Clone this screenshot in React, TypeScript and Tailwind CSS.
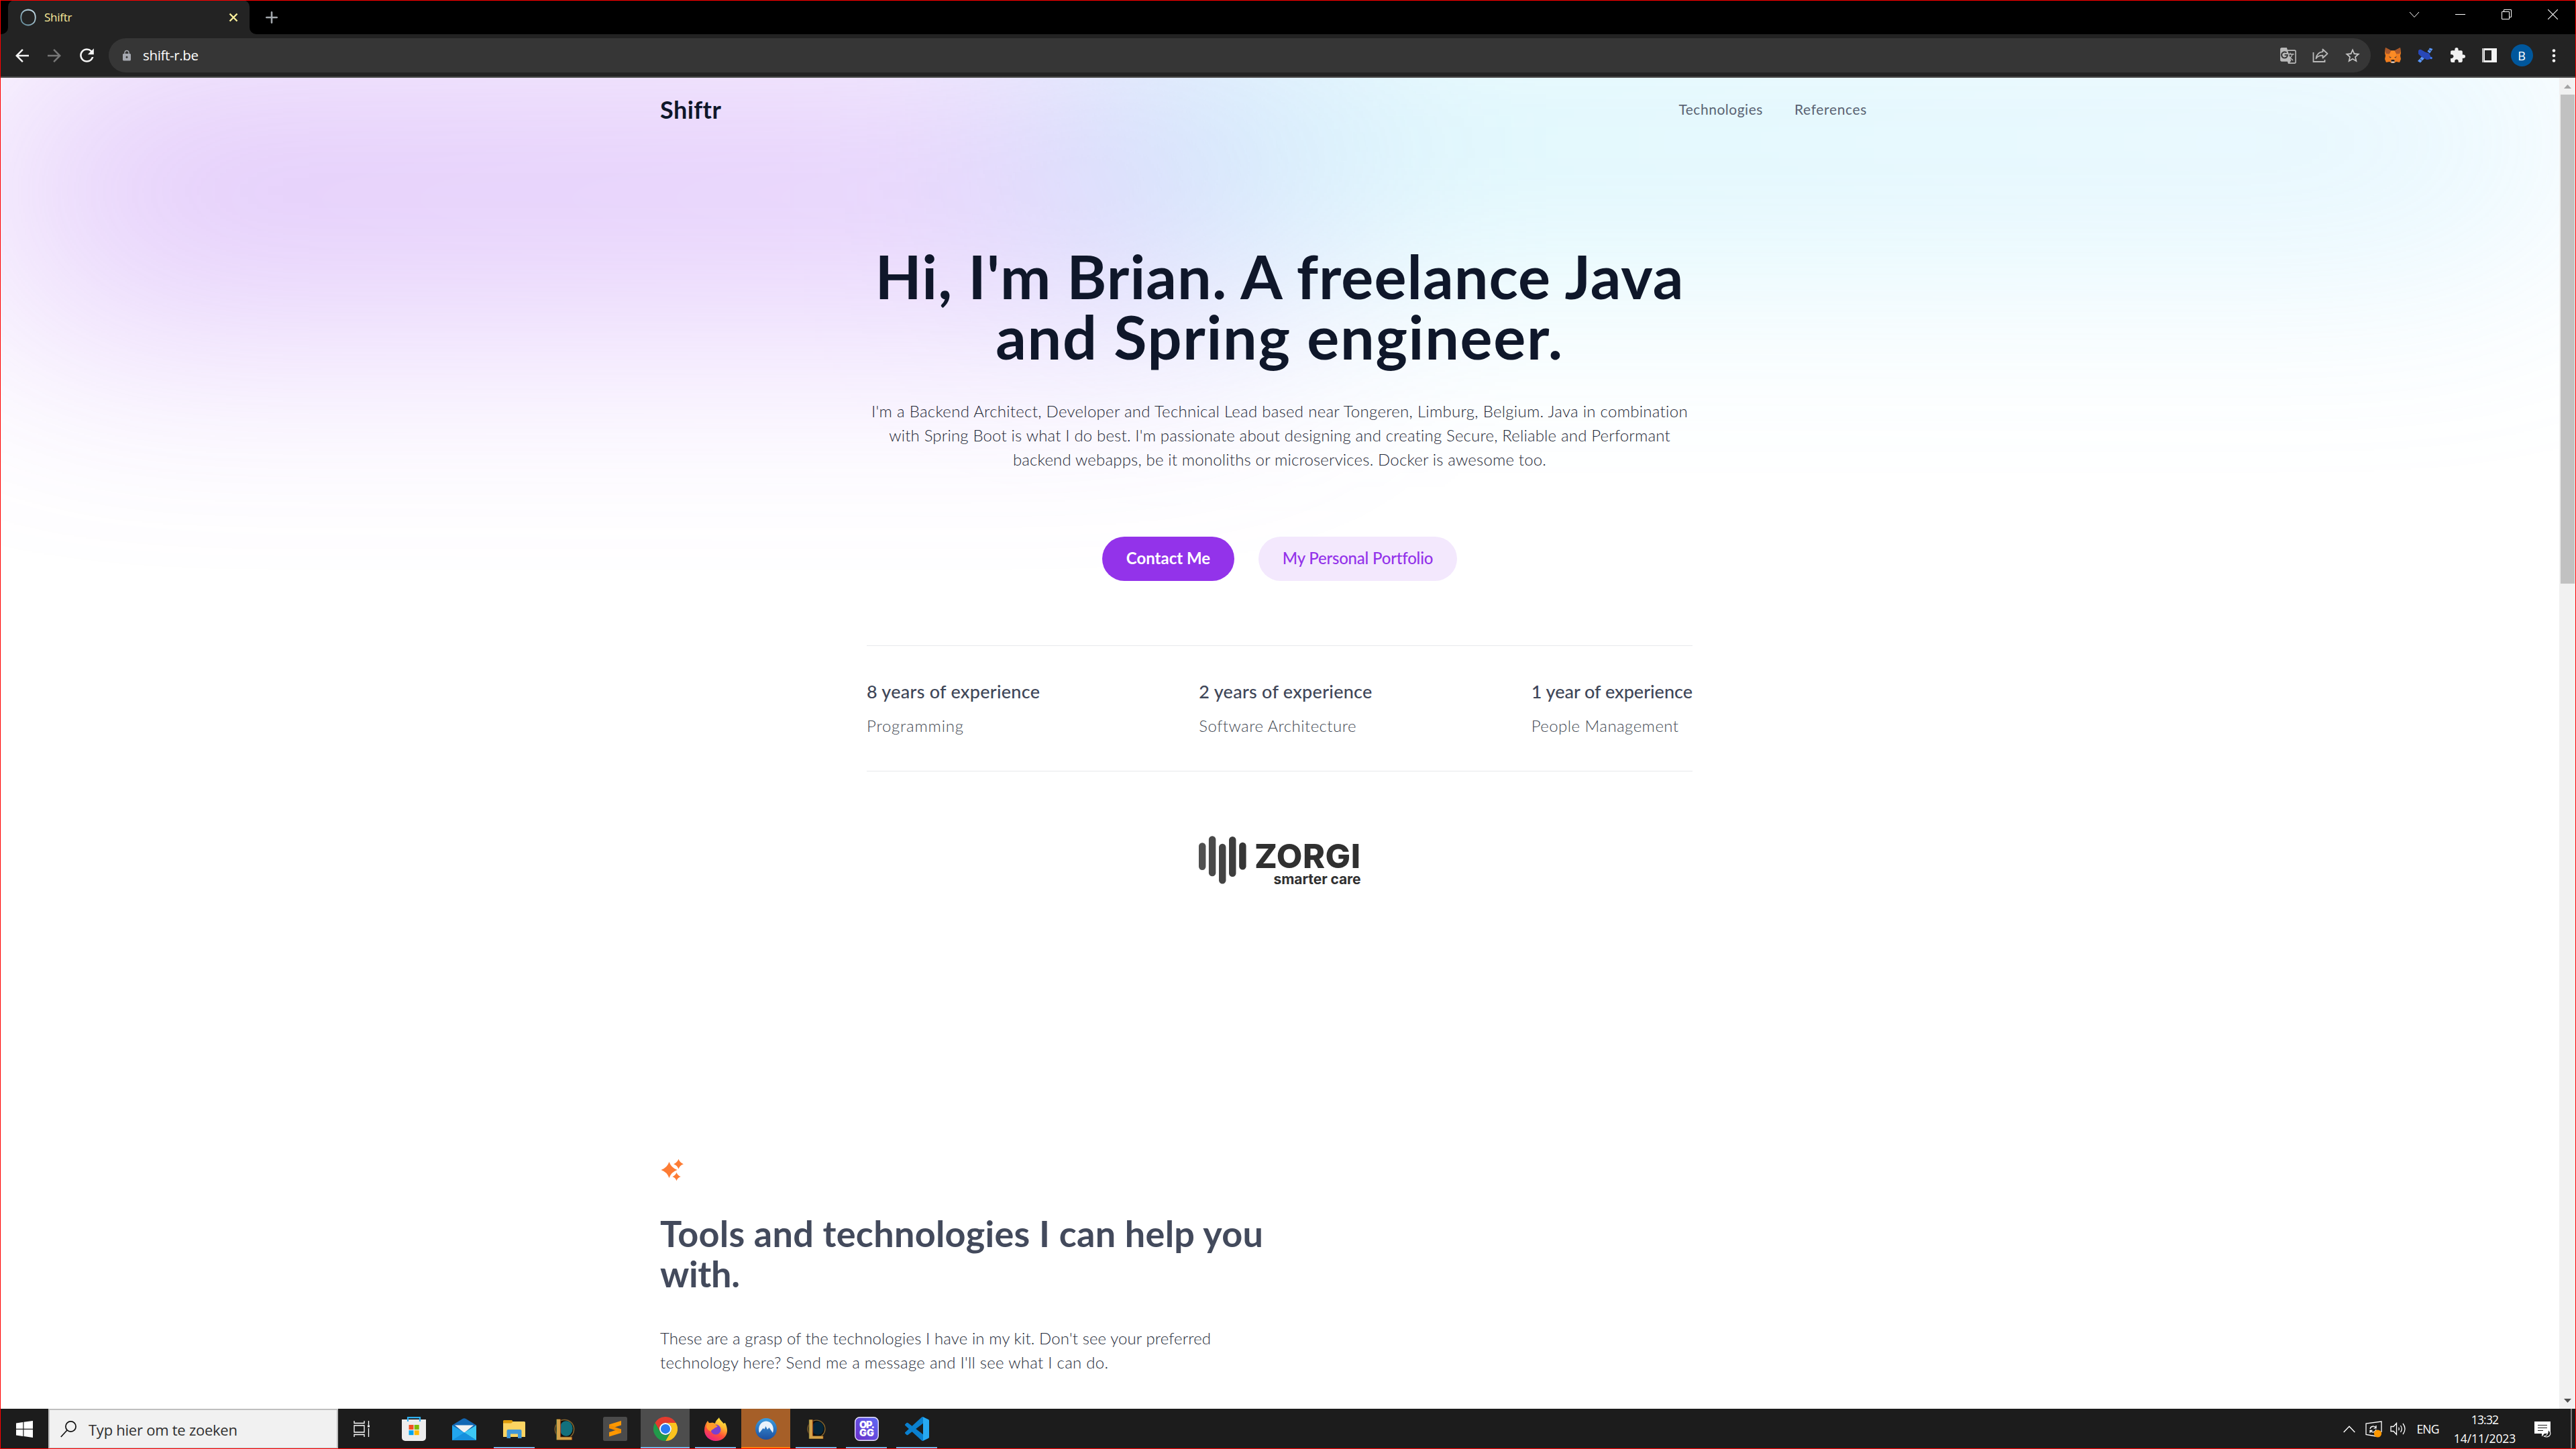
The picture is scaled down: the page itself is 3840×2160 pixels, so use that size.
import type { ReactNode } from "react";
import { MdArrowBack, MdArrowForward, MdExtension, MdGTranslate, MdLock, MdRefresh, MdStarBorder } from "react-icons/md";

/* ---------- browser chrome ---------- */

function Cell({ children, className = "w-12" }: { children: ReactNode; className?: string }) {
  return <div className={"flex shrink-0 items-center justify-center " + className}>{children}</div>;
}

function TabStrip() {
  return (
    <div className="flex h-[51px] bg-black">
      <div className="w-3 bg-[#232323]"><div className="size-full rounded-br-[10px] bg-black" /></div>
      <div className="flex w-[360px] items-center rounded-t-[10px] bg-[#232323] pr-[17px] pl-[18px]">
        <svg width="24" height="26" viewBox="0 0 24 26" fill="none">
          <defs>
            <linearGradient id="hex" x1="0" y1="1" x2="1" y2="0">
              <stop offset="0" stopColor="#5d8796" />
              <stop offset="1" stopColor="#cfe6f2" />
            </linearGradient>
          </defs>
          <path d="M12 1.5 C16 1.7 19.5 3.8 21.5 6.8 C23 10.5 23 15.5 21.5 19.2 C19.5 22.3 16 24.3 12 24.5 C8 24.3 4.5 22.3 2.5 19.2 C1 15.5 1 10.5 2.5 6.8 C4.5 3.8 8 1.7 12 1.5Z" stroke="url(#hex)" strokeWidth="1.8" />
        </svg>
        <span className="ml-3 text-[17px] tracking-[-0.25px] text-[#fbeb9b]">Shiftr</span>
        <svg className="ml-auto" width="14" height="14" viewBox="0 0 14 14" stroke="#fdf09a" strokeWidth="2.4"><path d="M1.5 1.5l11 11M12.500 1.500l-11 11" /></svg>
      </div>
      <div className="w-3 bg-[#232323]"><div className="size-full rounded-bl-[10px] bg-black" /></div>
      <Cell className="w-[42px]">
        <svg width="18" height="18" viewBox="0 0 18 18" stroke="#a3a8ad" strokeWidth="2.6" strokeLinecap="round"><path d="M9 1.300v15.400M1.300 9h15.400" /></svg>
      </Cell>
      <div className="ml-auto flex pb-2">
        <Cell className="w-[69px]"><svg width="16" height="10" viewBox="0 0 16 10" fill="none" stroke="#fff" strokeWidth="1"><path d="M1 1l7 7.500L15 1" /></svg></Cell>
        <Cell className="w-[69px]"><div className="h-px w-[15px] bg-white" /></Cell>
        <Cell className="w-[69px]"><svg width="15" height="15" viewBox="0 0 15 15" fill="none" stroke="#fff"><path d="M.5 3.500h11v11h-11zM3.500 3.500v-3h11v11h-3" /></svg></Cell>
        <Cell className="w-[69px]"><svg width="15" height="15" viewBox="0 0 15 15" stroke="#fff" strokeWidth="1.1"><path d="M0 0l15 15M15 0L0 15" /></svg></Cell>
      </div>
    </div>
  );
}

function Fox() {
  return (
    <svg width="24" height="23" viewBox="0 0 24 23">
      <path d="M1 0l8.500 4.500h5L23 0l1 8-1 4 1 5-2 5-5-1-3 2h-4l-3-2-5 1-2-5 1-5-1-4z" fill="#ef7d1f" />
      <path d="M1 0l8.500 4.500L7 9.500 2 9 .5 6zM23 0l-8.500 4.500L17 9.500l5-.5 1.500-3z" fill="#a9582b" />
      <path d="M7 9.500l2.500-5h5l2.500 5-2 8H9z" fill="#fb8b25" />
      <path d="M6 13l4 1.500-2 1zM18 13l-4 1.500 2 1z" fill="#4a3a36" />
      <path d="M9 19h6l-1 4h-4z" fill="#d8c4b6" />
      <path d="M10 18h4l1 2.500h-6z" fill="#231f20" />
    </svg>
  );
}

function Satellite() {
  return (
    <svg width="24" height="23" viewBox="0 0 24 23">
      <path d="M15.500 5.500L19 .5 23.500 2 19 8.500zM1 20l6-6.500 4 2.500-6 6.500z" fill="#5a98ff" />
      <path d="M17.200 3l4 2M4 16.700l4 2.800" stroke="#232323" strokeWidth=".8" />
      <path d="M2 4.500Q3 2 6 3l6 3.500 6 2 2.500 5-2 4-4 .5-8-4.500-4.500-4z" fill="#2848b8" />
      <circle cx="21" cy="15.500" r="1.800" fill="#3f78f0" />
    </svg>
  );
}

function Toolbar() {
  return (
    <div className="flex h-[65px] items-center border-b-2 border-[#505050] bg-[#232323] pr-[9px] pl-[9px]">
      <Cell><MdArrowBack size={30} color="#f5f5f5" /></Cell>
      <Cell><MdArrowForward size={30} color="#777" /></Cell>
      <Cell><MdRefresh size={31} color="#f5f5f5" /></Cell>
      <div className="ml-[9px] flex h-[51px] flex-1 items-center rounded-full bg-[#363636] pr-[3px] pl-[18px]">
        <MdLock size={18} color="#a6a9b1" />
        <span className="ml-[15px] text-[20.5px] tracking-[-0.35px] text-white">shift-r.be</span>
        <div className="ml-auto flex">
          <Cell><MdGTranslate size={26} color="#b9b9b9" /></Cell>
          <Cell>
            <svg width="24" height="22" viewBox="0 0 24 22" fill="none" stroke="#b9b9b9" strokeWidth="1.800">
              <path d="M1.500 6v14h17v-3" />
              <path d="M15.500 1.500l7 6.500-7 6.500v-3.800c-4 0-7.500.8-10 4.500.8-5.500 4-9.500 10-10z" strokeLinejoin="round" />
            </svg>
          </Cell>
          <Cell><MdStarBorder size={26} color="#c4c4c4" /></Cell>
        </div>
      </div>
      <div className="ml-[9px] flex">
        <Cell><Fox /></Cell>
        <Cell><Satellite /></Cell>
        <Cell><MdExtension size={25} color="#f1f1f1" /></Cell>
        <Cell><svg width="22" height="21"><path d="M0 0h22v21H0z" fill="#f3f3f3" /><path d="M0 0h3v21H0z" fill="#bdbdbd" /><path d="M4 3h10v15H4z" fill="#232323" /></svg></Cell>
        <Cell><div className="flex size-[33px] items-center justify-center rounded-full bg-[#00579c] text-[18px] leading-none text-white">B</div></Cell>
        <Cell><svg width="6" height="20" fill="#f3f3f3"><circle cx="3" cy="2.500" r="2.300" /><circle cx="3" cy="10" r="2.300" /><circle cx="3" cy="17.500" r="2.300" /></svg></Cell>
      </div>
    </div>
  );
}

function Scrollbar() {
  return (
    <div className="flex w-[25px] flex-col bg-[#f1f1f1]">
      <Cell className="h-[25px] w-full"><svg width="11" height="6"><path d="M5.500 0L11 6H0z" fill="#a3a3a3" /></svg></Cell>
      <div className="ml-[2px] h-[729px] w-[21px] bg-[#c1c1c1]" />
      <Cell className="mt-auto h-6 w-full"><svg width="11" height="6"><path d="M0 0h11L5.500 6z" fill="#505050" /></svg></Cell>
    </div>
  );
}

/* ---------- web page ---------- */

function Glow() {
  return (
    <div aria-hidden="true" className="absolute inset-0 grid grid-cols-2 opacity-40">
      <div className="h-[336px] bg-gradient-to-br from-[#9333ea] to-[#c084fc] blur-[190px]" />
      <div className="-ml-[312px] h-[192px] bg-gradient-to-r from-[#22d3ee] to-[#7dd3fc] blur-[190px]" />
    </div>
  );
}

function Stat({ title, label, titleClass, labelClass }: { title: string; label: string; titleClass: string; labelClass: string }) {
  return (
    <div>
      <div className={"text-[27px] leading-[42px] font-medium text-[#3f4759] " + titleClass}>{title}</div>
      <div className={"mt-3 text-2xl leading-9 font-light text-[#454b55] " + labelClass}>{label}</div>
    </div>
  );
}

function ZorgiLogo() {
  return (
    <div className="mx-auto mt-24 flex h-[72px] w-[242px]">
      <svg width="72" height="72" viewBox="0 0 72 72">
        <rect x="0" y="10" width="10.500" height="41" rx="5.200" fill="#505050" />
        <rect x="15" y="0" width="10.500" height="60.500" rx="5.200" fill="#494949" />
        <rect x="30.200" y="11.700" width="10.500" height="60" rx="5.200" fill="#444" />
        <rect x="45.300" y=".7" width="10.500" height="60.500" rx="5.200" fill="#3d3d3d" />
        <rect x="60.500" y="9.600" width="10.500" height="41" rx="5.200" fill="#363636" />
      </svg>
      <div className="ml-3 flex flex-1 flex-col items-end whitespace-nowrap font-[Inter,sans-serif] text-[#303030]">
        <div className="mt-[5px] text-[50px] leading-[50px] font-extrabold tracking-[0.5px]">ZORGI</div>
        <div className="text-[21px] leading-[20px] font-bold tracking-[-0.08px]">smarter care</div>
      </div>
    </div>
  );
}

function Sparkles() {
  const star = "M0-1Q.26-.26 1 0Q.26.26 0 1Q-.26.26-1 0Q-.26-.26 0-1Z";
  return (
    <svg width="36" height="36" viewBox="0 0 36 36" fill="#fd7c34">
      <path d={star} transform="translate(13.500 18) scale(12)" />
      <path d={star} transform="translate(27.500 9.200) scale(7.400)" />
      <path d={star} transform="translate(24.500 28) scale(6.200)" />
    </svg>
  );
}

function Page() {
  return (
    <main className="relative h-[1984px] flex-1 overflow-hidden bg-white font-[Lato,sans-serif]">
      <Glow />
      <div className="relative">
        <header className="mx-auto flex h-[94px] w-[1847px] items-center justify-between whitespace-nowrap">
          <span className="text-4xl leading-9 font-bold tracking-[0.43px] text-[#0f172a]">Shiftr</span>
          <nav className="flex gap-[47px] pr-[48px] text-[21px] leading-9 text-[#5a6373]">
            <a className="tracking-[0.52px]">Technologies</a>
            <a className="tracking-[0.65px]">References</a>
          </nav>
        </header>
        <h1 className="mt-[156px] text-center text-[90px] leading-[90px] font-bold whitespace-nowrap text-[#0f172a]">
          <span className="tracking-[1.05px]">Hi, I'm Brian. A freelance Java</span>
          <br />
          <span className="tracking-[1.68px]">and Spring engineer.</span>
        </h1>
        <p className="mt-[49px] text-center text-2xl leading-9 font-light whitespace-nowrap text-[#1f2937]">
          <span className="tracking-[0.281px]">I'm a Backend Architect, Developer and Technical Lead based near Tongeren, Limburg, Belgium. Java in combination</span>
          <br />
          <span className="tracking-[0.173px]">with Spring Boot is what I do best. I'm passionate about designing and creating Secure, Reliable and Performant</span>
          <br />
          <span className="tracking-[0.166px]">backend webapps, be it monoliths or microservices. Docker is awesome too.</span>
        </p>
        <div className="mt-[97px] flex justify-center gap-9 text-2xl leading-none whitespace-nowrap">
          <button className="flex h-[66px] w-[197px] items-center justify-center rounded-full bg-[#9333ea] pb-0.5 font-bold text-white">Contact Me</button>
          <button className="flex h-[66px] w-[296px] items-center justify-center rounded-full bg-[#f3e8fd] pb-0.5 font-medium tracking-[-0.2px] text-[#9333ea]">My Personal Portfolio</button>
        </div>
        <div className="mx-auto mt-24 flex w-[1231px] justify-between border-y border-[#e7e8eb] pt-[47px] pb-[49px] whitespace-nowrap">
          <Stat title="8 years of experience" label="Programming" titleClass="tracking-[0.275px]" labelClass="tracking-[0.77px]" />
          <Stat title="2 years of experience" label="Software Architecture" titleClass="tracking-[0.275px]" labelClass="tracking-[0.44px]" />
          <Stat title="1 year of experience" label="People Management" titleClass="tracking-normal" labelClass="tracking-[0.45px]" />
        </div>
        <ZorgiLogo />
        <section className="mx-auto mt-[408px] w-[1847px] whitespace-nowrap">
          <Sparkles />
          <h2 className="mt-[47px] text-[54px] leading-[60px] font-bold text-[#434a5c]">
            <span className="tracking-[0.276px]">Tools and technologies I can help you</span>
            <br />
            <span className="tracking-[-0.35px]">with.</span>
          </h2>
          <p className="mt-12 text-2xl leading-9 font-light text-[#262c3a]">
            <span className="tracking-[0.094px]">These are a grasp of the technologies I have in my kit. Don't see your preferred</span>
            <br />
            <span className="tracking-[0.263px]">technology here? Send me a message and I'll see what I can do.</span>
          </p>
        </section>
      </div>
    </main>
  );
}

/* ---------- taskbar ---------- */

function WindowsIcon() {
  return <svg width="25" height="25" viewBox="0 0 25 25" fill="#fff"><path d="M0 3.500L10.300 2v9.800H0zM11.500 1.800L25 0v11.800H11.500zM0 13h10.300v10L0 21.500zM11.500 13H25v12l-13.500-1.900z" /></svg>;
}

function StoreIcon() {
  return (
    <svg width="36" height="36" viewBox="0 0 36 36">
      <path d="M9 6V1.200h18V6" fill="none" stroke="#2fb0f0" strokeWidth="2.200" />
      <path d="M0 4h36v27a5 5 0 0 1-5 5H5a5 5 0 0 1-5-5z" fill="#ededed" />
      <path d="M9 4v3M27 4v3" stroke="#2fb0f0" strokeWidth="2.200" />
      <path d="M10.500 12h7v7h-7z" fill="#f25022" /><path d="M18.700 12h7v7h-7z" fill="#7fba00" />
      <path d="M10.500 20.200h7v7h-7z" fill="#00a4ef" /><path d="M18.700 20.200h7v7h-7z" fill="#ffb900" />
    </svg>
  );
}

function MailIcon() {
  return (
    <svg width="36" height="33" viewBox="0 0 36 33">
      <path d="M0 10.500L15.500 1q2.500-1.500 5 0L36 10.500 18 22z" fill="#1267b4" />
      <path d="M4 10.500h28L18 22z" fill="#f2f2f2" />
      <path d="M0 10.500L18 21.500 36 33H0z" fill="#22a6ee" />
      <path d="M36 10.500V33L18 21.500z" fill="#3cc8f4" />
      <path d="M0 33l18-11.500L36 33z" fill="#1590dd" />
    </svg>
  );
}

function ExplorerIcon() {
  return (
    <svg width="33" height="27" viewBox="0 0 33 27">
      <path d="M1 0h12l2.500 3H32v4H0V1z" fill="#dd9a0a" />
      <path d="M0 4.500h12l3-2.500h16.500q1.500 0 1.500 1.500V25H0z" fill="#fcd462" />
      <path d="M5.500 16q0-2 2-2h18q2 0 2 2v11H22v-6.500H11V27H5.500z" fill="#3f97d8" />
    </svg>
  );
}

function LeagueIcon({ size, glow }: { size: number; glow: string }) {
  return (
    <svg className="overflow-visible" width={size} height={size} viewBox="0 0 36 36">
      <circle cx="18" cy="18" r="14.500" fill="#0d0c0a" stroke="#86672f" strokeWidth="1.600" />
      <ellipse cx="20.500" cy="17" rx="10" ry="11.500" fill={glow} />
      <text x="2" y="35" fontFamily="Liberation Sans, sans-serif" fontWeight="700" fontSize="48" textLength="29" lengthAdjust="spacingAndGlyphs" fill="#d3a148" stroke="#1d1408" strokeWidth=".8">L</text>
    </svg>
  );
}

function SublimeIcon() {
  return (
    <svg width="36" height="36" viewBox="0 0 36 36">
      <rect width="36" height="36" rx="2.500" fill="#4b4b4b" />
      <path d="M9 11.500L27 6v6.500l-9.500 3L27 18.500V24L9 29.500V23l9.500-3L9 17z" fill="#ff9800" />
      <path d="M9 17l0-5.500 18 7v5.500z" fill="#e07f00" opacity=".35" />
    </svg>
  );
}

function ChromeIcon() {
  return (
    <svg width="36" height="36" viewBox="0 0 48 48">
      <path d="M3.200 12A24 24 0 0 1 44.800 12H24A12 12 0 0 0 13.600 30z" fill="#e33b2e" />
      <path d="M44.800 12A24 24 0 0 1 24 48L34.400 30A12 12 0 0 0 24 12z" fill="#fcc31e" />
      <path d="M24 48A24 24 0 0 1 3.200 12L13.600 30A12 12 0 0 0 34.400 30z" fill="#219a4a" />
      <circle cx="24" cy="24" r="12" fill="#fff" />
      <circle cx="24" cy="24" r="9.500" fill="#2a7bf0" />
    </svg>
  );
}

function FirefoxIcon() {
  return (
    <svg width="34" height="35" viewBox="0 0 34 35">
      <defs>
        <linearGradient id="ff" x1=".8" y1="0" x2=".3" y2="1">
          <stop offset="0" stopColor="#fff04a" /><stop offset=".35" stopColor="#ffb52e" />
          <stop offset=".65" stopColor="#ff5038" /><stop offset="1" stopColor="#e8208a" />
        </linearGradient>
      </defs>
      <path d="M0 19C0 13 2 9 5 5c0 2 1 3 2.500 3.500C11 7 14 8 16 9 17 4 20 3 22 0c1 4 5 6 6.500 9L31 8c2 4 3 8 3 12-.5 9-8 15-17 15S0 28 0 19z" fill="url(#ff)" />
      <circle cx="17" cy="18" r="7.500" fill="#7a3fd0" />
      <path d="M3 14c1-4 2-6 2-9 1 2.500 2 3.500 4 3.500 4-.5 6 1 9 3.500l2 .5c-1 2-4 2.500-5 3.500-2 2-5 2-5 5-3-1-6-3-7-7z" fill="#ff9a2a" />
    </svg>
  );
}

function NordIcon() {
  return (
    <svg width="32" height="32" viewBox="0 0 32 32">
      <defs><linearGradient id="nord" x1="0" y1="0" x2="0" y2="1"><stop offset="0" stopColor="#3b9be0" /><stop offset="1" stopColor="#1d4f9e" /></linearGradient></defs>
      <circle cx="16" cy="16" r="16" fill="url(#nord)" />
      <path d="M6 22C3 13 8 4.500 16 4.500S29 13 26 22l-5.500-8-2.500 3-2.500-5-2 4.500L11.500 15z" fill="#eaf2fb" />
    </svg>
  );
}

function OpggIcon() {
  return (
    <svg width="36" height="36" viewBox="0 0 36 36">
      <defs><linearGradient id="opgg" x1="1" y1="0" x2="0" y2="1"><stop offset="0" stopColor="#5f6cf4" /><stop offset="1" stopColor="#6a2cc8" /></linearGradient></defs>
      <rect x=".7" y=".7" width="34.600" height="34.600" rx="7" fill="url(#opgg)" stroke="#e8e3fb" strokeWidth="1.400" />
      <g fill="#fff" fontFamily="Inter, sans-serif" fontWeight="900" fontSize="14.500">
        <text x="7" y="17" textLength="23">OP.</text>
        <text x="7" y="29" textLength="22">GG</text>
      </g>
    </svg>
  );
}

function CodeIcon() {
  return (
    <svg width="36" height="36" viewBox="0 0 24 24">
      <path d="M23.150 2.587L18.210.21a1.494 1.494 0 0 0-1.705.29l-9.460 8.630-4.120-3.128a.999.999 0 0 0-1.276.057L.327 7.261A1 1 0 0 0 .326 8.740L3.899 12 .326 15.260a1 1 0 0 0 .001 1.479L1.650 17.940a.999.999 0 0 0 1.276.057l4.120-3.128 9.460 8.630a1.492 1.492 0 0 0 1.704.290l4.942-2.377A1.500 1.500 0 0 0 24 20.060V3.939a1.500 1.500 0 0 0-.850-1.352zm-5.146 14.861L10.826 12l7.178-5.448v10.896z" fill="#0a80cf" />
      <path d="M18.004.300l5.146 2.287a1.500 1.500 0 0 1 .85 1.352v16.121a1.500 1.500 0 0 1-.85 1.352L18.004 23.700z" fill="#27a9f2" />
    </svg>
  );
}

function TaskButton({ children, state = "none" }: { children: ReactNode; state?: "none" | "open" | "active" | "alert" }) {
  const fill = state === "active" ? "bg-[#4d4d4d]" : state === "alert" ? "bg-[#a65f28]" : "bg-transparent";
  const bar = state === "open" ? "w-[61px] bg-[#76b9ed]" : state === "active" ? "w-full bg-[#76b9ed]" : state === "alert" ? "w-full bg-[#ff7d0a]" : "w-full bg-transparent";
  return (
    <div className={"mr-[2px] flex w-[73px] flex-col items-center " + fill}>
      <div className="flex h-[57px] items-center justify-center pt-[3px]">{children}</div>
      <div className={"h-[3px] " + bar} />
    </div>
  );
}

function Taskbar() {
  return (
    <div className="flex h-[60px] bg-[#1c1c1c] font-['Open_Sans',sans-serif] text-white">
      <Cell className="w-[72px]"><WindowsIcon /></Cell>
      <div className="flex w-[432px] items-center border-2 border-[#bfbfbf] bg-[#f1f1f1] pl-4">
        <svg width="25" height="25" viewBox="0 0 25 25" fill="none" stroke="#111" strokeWidth="1.700"><circle cx="15.500" cy="8.500" r="7.600" /><path d="M10 14L.8 24" /></svg>
        <span className="ml-[17px] pt-[3px] text-[22px] tracking-[-0.25px] whitespace-nowrap text-[#2f2f2f]">Typ hier om te zoeken</span>
      </div>
      <div className="flex pl-px">
        <TaskButton>
          <svg className="mr-1" width="25" height="24" viewBox="0 0 25 24" fill="none" stroke="#fff" strokeWidth="1.300"><path d="M1 0v3.500h15V0M1 7h15v10H1zM1 24v-3.500h15V24M22.500 0v6M22.500 11v13" /><path d="M21 6.500h3v3h-3z" fill="#fff" stroke="none" /></svg>
        </TaskButton>
        <TaskButton><StoreIcon /></TaskButton>
        <TaskButton><MailIcon /></TaskButton>
        <TaskButton state="open"><ExplorerIcon /></TaskButton>
        <TaskButton><LeagueIcon size={35} glow="#12707c" /></TaskButton>
        <TaskButton><SublimeIcon /></TaskButton>
        <TaskButton state="active"><ChromeIcon /></TaskButton>
        <TaskButton state="open"><FirefoxIcon /></TaskButton>
        <TaskButton state="alert"><NordIcon /></TaskButton>
        <TaskButton state="open"><LeagueIcon size={32} glow="#062436" /></TaskButton>
        <TaskButton state="open"><OpggIcon /></TaskButton>
        <TaskButton state="open"><CodeIcon /></TaskButton>
      </div>
      <div className="ml-auto flex">
        <Cell className="w-9"><svg width="18" height="11" viewBox="0 0 18 11" fill="none" stroke="#fff" strokeWidth="1.400"><path d="M.7 10L9 1.200 17.300 10" /></svg></Cell>
        <Cell className="w-9">
          <svg width="25" height="25" viewBox="0 0 25 25" fill="none" stroke="#fff" strokeWidth="1.300">
            <path d="M16 23L1 20.500V4L24 1v16" />
            <path d="M7 12c1-4.500 7-5 9-1.500M16 7v3.800h-3.500M16 13c-1 4.500-6.500 5-8.500 1.800M7 18v-3.500h3.500" />
            <circle cx="18.500" cy="19" r="5.600" fill="#ff9800" stroke="none" />
          </svg>
        </Cell>
        <Cell className="w-[38px]"><svg width="24" height="20" viewBox="0 0 24 20" fill="none" stroke="#fff" strokeWidth="1.300"><path d="M1 6.500h4L9.500 1.500v17L5 13.500H1zM12.500 8q1.500 2 0 4M15.500 5q3.500 5 0 10M19 2q6 8 0 16" /></svg></Cell>
        <Cell className="w-[50px]"><span className="text-[17.5px] tracking-[-0.9px]">ENG</span></Cell>
        <div className="flex w-[120px] flex-col items-center pt-[2px] text-[17.5px] leading-7 whitespace-nowrap">
          <span className="tracking-[-0.8px]">13:32</span>
          <span className="tracking-[-0.02px]">14/11/2023</span>
        </div>
        <Cell className="w-[52px]">
          <svg width="25" height="25" viewBox="0 0 25 25">
            <path d="M0 0h24v18h-9l-4 4.500V18H0z" fill="#fff" transform="translate(0 1)" />
            <path d="M5 6.500h14M5 10.500h14M5 14.500h8" stroke="#1c1c1c" strokeWidth="1.200" />
            <path d="M20 13c3 2 4.500 4.500 3.500 7.500s-5.500 4.500-9 2.500c4-.5 6.500-4 5.500-10z" fill="#1c1c1c" stroke="#fff" strokeWidth="1.100" />
          </svg>
        </Cell>
        <div className="mr-[6px] ml-[16px] w-[2px] bg-[#7a7a7a]" />
      </div>
    </div>
  );
}

export default function App() {
  return (
    <div className="relative h-[2160px] w-[3840px] overflow-hidden bg-white">
      <div className="font-['Open_Sans',sans-serif]">
        <TabStrip />
        <Toolbar />
      </div>
      <div className="flex h-[1984px]">
        <Page />
        <Scrollbar />
      </div>
      <Taskbar />
      <div className="pointer-events-none absolute inset-0 border border-[#ff0000]" />
    </div>
  );
}
